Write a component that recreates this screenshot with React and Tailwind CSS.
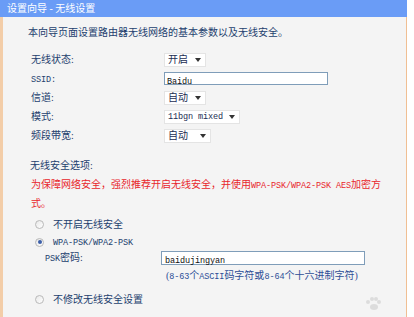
import React from 'react';

const FONT = { fontFamily: '"Liberation Serif", "Noto Sans CJK SC", serif' };

// SimSun-like half-width latin
function L({ children }) {
    return <span className="text-[8.5px] tracking-[-0.1px]" style={{ fontFamily: '"Liberation Mono", monospace' }}>{children}</span>;
}

function Select({ value, width }) {
    return (
        <div
            className="h-[14px] bg-white border border-[#e4e4e4] flex items-center justify-between pl-[3px] pr-[4px] text-[10px] text-[#1b2d52] leading-none"
            style={{ width }}
        >
            <span>{value}</span>
            <span className="w-0 h-0 border-l-[3px] border-r-[3px] border-t-[4px] border-l-transparent border-r-transparent border-t-[#333]" />
        </div>
    );
}

function Row({ label, children }) {
    return (
        <div className="h-[19px] flex items-center">
            <div className="w-[161px] pl-[28px] text-[10px] text-[#23406e]">{label}</div>
            {children}
        </div>
    );
}

function Radio({ checked, children }) {
    return (
        <div className="h-[18px] flex items-center pl-[32px]">
            <span className="w-[9px] h-[9px] rounded-full border border-[#b9b9b9] bg-gradient-to-br from-[#e8e8e8] to-white flex items-center justify-center">
                {checked && <span className="w-[4px] h-[4px] rounded-full bg-[#3c5fa8]" />}
            </span>
            <span className="ml-[9px] text-[10px] text-[#23406e]">{children}</span>
        </div>
    );
}

export default function App() {
    return (
        <div className="w-[414px] h-[317px] bg-white overflow-hidden" style={FONT}>
            <div className="w-[407px] h-full flex flex-col">
                <div className="h-[17px] bg-[#6a9cf6] text-white text-[10px] leading-[17px] pl-[7px]">
                    设置向导 - 无线设置
                </div>
                <div className="flex-1 bg-[#f4f4f4] border-l-[3px] border-r border-l-[#f3cda8] border-r-[#f0bf93] pt-[9px]">
                    <div className="h-[14px] leading-[14px] pl-[25px] text-[10px] text-[#23406e]">
                        本向导页面设置路由器无线网络的基本参数以及无线安全。
                    </div>
                    <div className="mt-[10px]">
                        <Row label="无线状态:"><Select value="开启" width={42} /></Row>
                        <Row label={<L>SSID:</L>}>
                            <div className="w-[164px] h-[13px] bg-white border border-[#7f9db9] leading-[11px] pl-[2px] text-[#111]"><L>Baidu</L></div>
                        </Row>
                        <Row label="信道:"><Select value="自动" width={42} /></Row>
                        <Row label="模式:"><Select value={<L>11bgn mixed</L>} width={76} /></Row>
                        <Row label="频段带宽:"><Select value="自动" width={47} /></Row>
                    </div>
                    <div className="mt-[14px] h-[14px] leading-[14px] pl-[27px] text-[10px] text-[#23406e]">无线安全选项:</div>
                    <div className="mt-[3px] pl-[28px] pr-[24px] text-[10px] leading-[18px] text-[#e8262c]">
                        为保障网络安全，强烈推荐开启无线安全，并使用<L>WPA-PSK/WPA2-PSK AES</L>加密方式。
                    </div>
                    <div className="mt-[2px]">
                        <Radio>不开启无线安全</Radio>
                        <Radio checked><L>WPA-PSK/WPA2-PSK</L></Radio>
                        <div className="h-[14px] flex items-center">
                            <div className="w-[158px] pl-[42px] text-[10px] text-[#23406e]"><L>PSK</L>密码:</div>
                            <div className="w-[204px] h-[14px] bg-white border border-[#7f9db9] leading-[12px] pl-[3px] text-[#111]"><L>baidujingyan</L></div>
                        </div>
                        <div className="mt-[4px] h-[14px] leading-[14px] pl-[163px] text-[10px] text-[#2d4f97]">
                            (<L>8-63</L>个<L>ASCII</L>码字符或<L>8-64</L>个十六进制字符)
                        </div>
                        <div className="mt-[7px]">
                            <Radio>不修改无线安全设置</Radio>
                        </div>
                    </div>
                    <div className="flex justify-end pr-[24px] -mt-[12px]">
                        <svg width="18" height="14" viewBox="0 0 18 14">
                            <circle cx="4" cy="6" r="2" fill="#dcdcdc" />
                            <circle cx="8" cy="3" r="2" fill="#dcdcdc" />
                            <circle cx="12" cy="3" r="2" fill="#dcdcdc" />
                            <circle cx="15" cy="6" r="2" fill="#dcdcdc" />
                            <ellipse cx="10" cy="11" rx="4" ry="3" fill="#dcdcdc" />
                        </svg>
                    </div>
                </div>
            </div>
        </div>
    );
}
